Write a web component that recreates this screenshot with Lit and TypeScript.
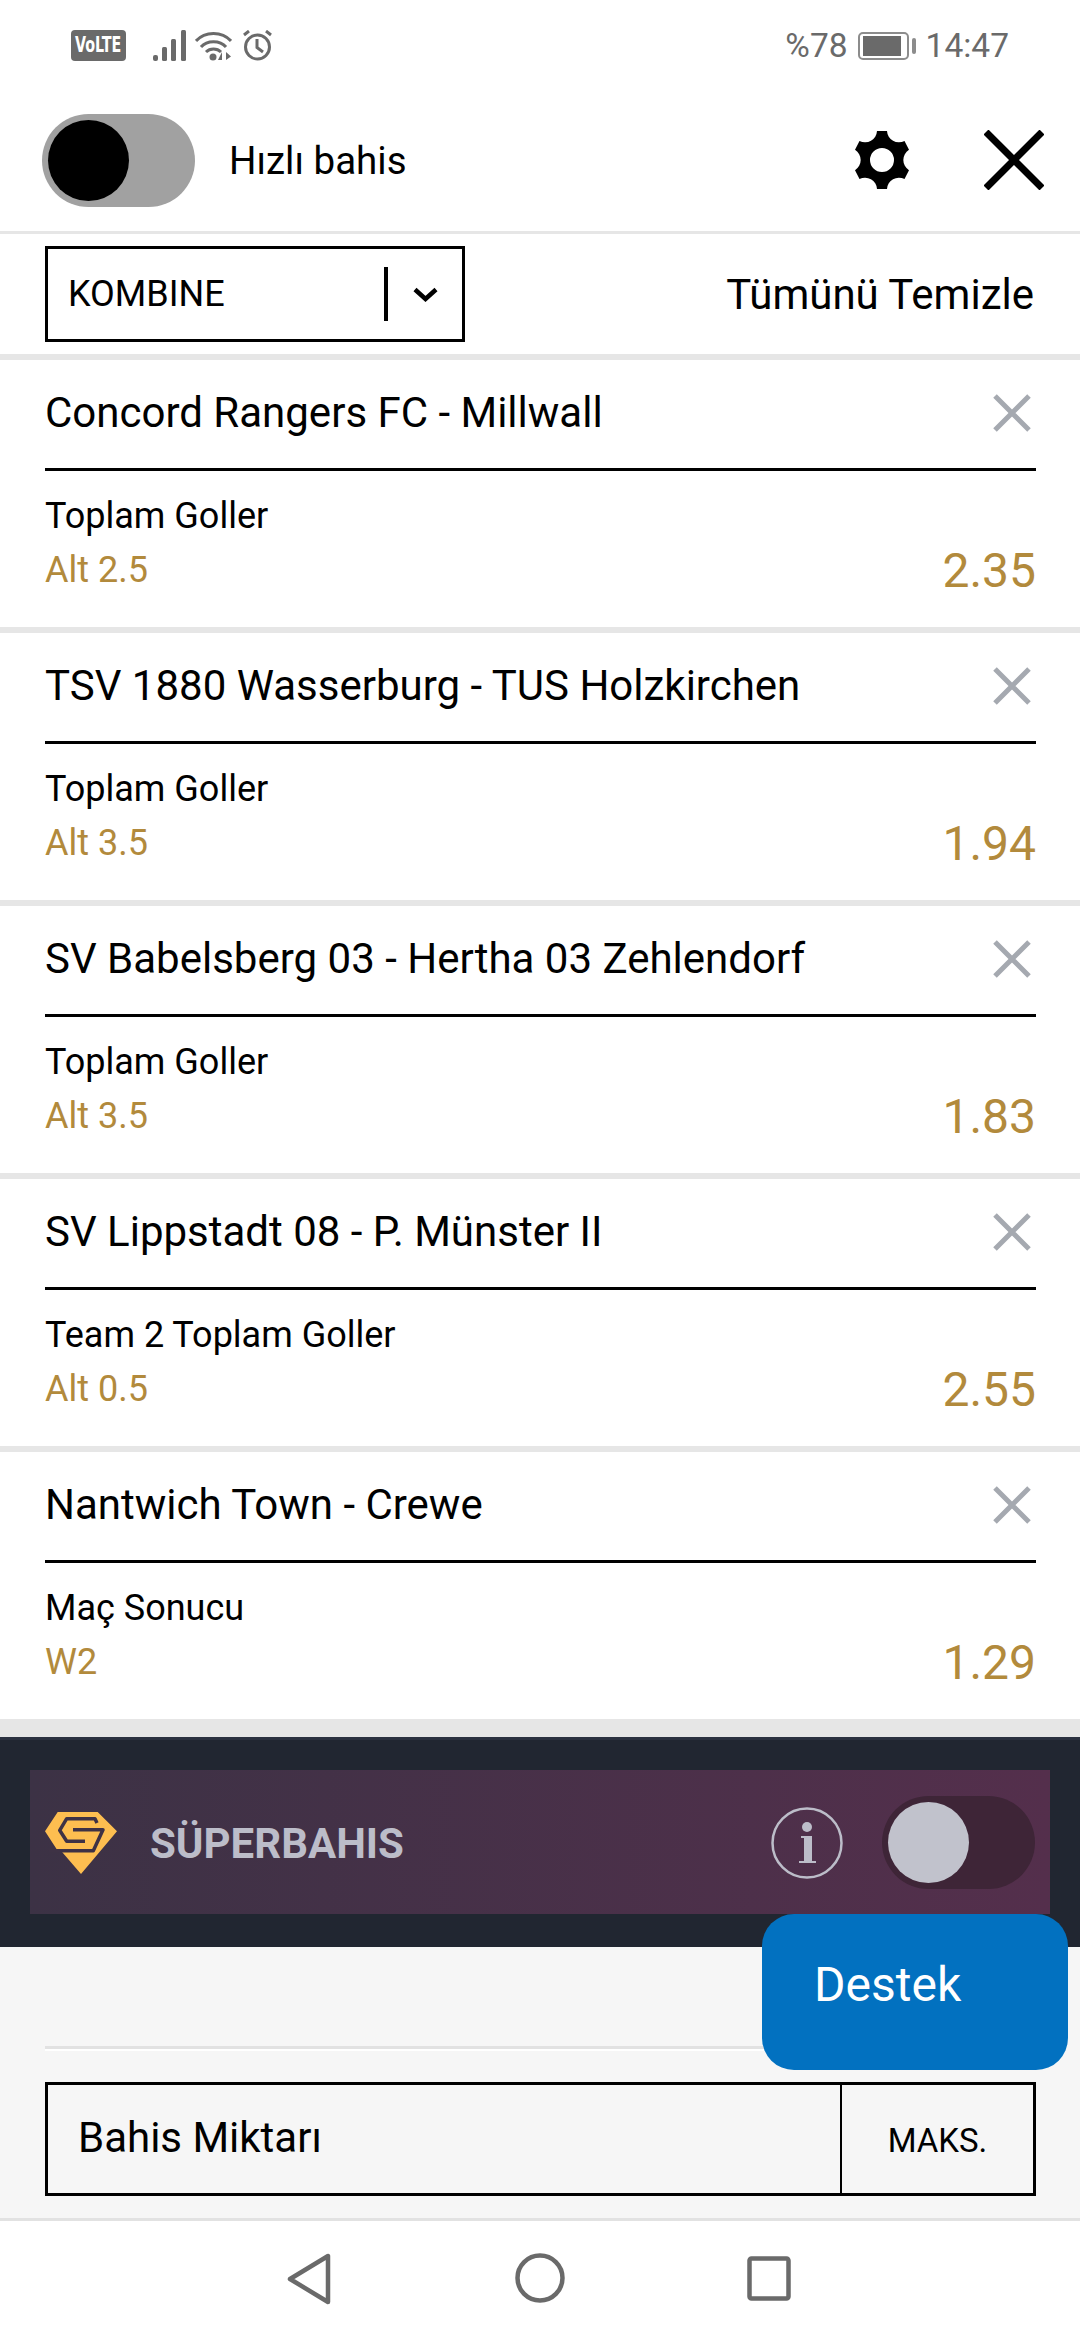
import { LitElement, html, css } from "lit";
import { customElement } from "lit/decorators.js";

const bets = [
  { t: "Concord Rangers FC - Millwall", m: "Toplam Goller", s: "Alt 2.5", o: "2.35" },
  { t: "TSV 1880 Wasserburg - TUS Holzkirchen", m: "Toplam Goller", s: "Alt 3.5", o: "1.94" },
  { t: "SV Babelsberg 03 - Hertha 03 Zehlendorf", m: "Toplam Goller", s: "Alt 3.5", o: "1.83" },
  { t: "SV Lippstadt 08 - P. Münster II", m: "Team 2 Toplam Goller", s: "Alt 0.5", o: "2.55" },
  { t: "Nantwich Town - Crewe", m: "Maç Sonucu", s: "W2", o: "1.29" },
];

@customElement("app-root")
export class AppRoot extends LitElement {
  static styles = css`
    :host { display: block; position: relative; width: 1080px; height: 2340px; overflow: hidden; background: #fff; font-family: Roboto, "Noto Sans", sans-serif; color: #000; }
    svg { display: block; flex: none; }
    .status { height: 84px; box-sizing: border-box; padding: 30px 0 0 71px; display: flex; color: #6a6a6a; font-size: 33.500px; }
    .status-left { display: flex; align-items: flex-start; }
    .volte { width: 55px; height: 31px; border-radius: 4px; background: #6a6a6a; color: #fff; margin-right: 27px; display: flex; align-items: center; justify-content: center; font-family: "DejaVu Sans", sans-serif; font-weight: 700; font-size: 21px; line-height: 31px; }
    .volte span { display: block; flex: none; transform: scaleX(0.68); }
    .signal { margin-right: 9px; }
    .wifi { margin-right: 10px; }
    .status-right { margin-left: auto; margin-right: 71px; display: flex; align-items: center; height: 31px; gap: 10px; line-height: 31px; }
    .header { height: 147px; box-sizing: border-box; padding: 5px 36px 0 42px; display: flex; align-items: center; }
    .fast { width: 153px; height: 93px; border-radius: 47px; background: #a1a1a1; display: flex; align-items: center; padding-left: 6px; box-sizing: border-box; margin-right: 34px; }
    .fast i { display: block; width: 81px; height: 81px; border-radius: 50%; background: #000; }
    .fast-label { font-size: 38.500px; flex: 1; }
    .gear { margin-right: 75px; }
    .sep { height: 3px; background: #e6e6e6; }
    .tools { height: 120px; box-sizing: border-box; padding: 12px 46px 12px 45px; display: flex; align-items: center; justify-content: space-between; }
    .select { width: 420px; height: 96px; box-sizing: border-box; border: 3px solid #000; display: flex; align-items: center; padding-left: 20px; font-size: 36px; }
    .select span { flex: 1; }
    .select b { display: block; width: 4px; height: 54px; background: #000; margin-right: 25px; }
    .select svg { margin-right: 24px; }
    .clear { font-size: 42px; }
    .card-gap { height: 6px; background: #e6e6e6; }
    .card { height: 267px; padding: 0 44px 0 45px; background: #fff; }
    .card-top { height: 108px; box-sizing: content-box; border-bottom: 3px solid #000; display: flex; align-items: center; justify-content: space-between; font-size: 42px; }
    .card-top span { margin-top: -3px; }
    .card-top svg { margin-right: 5px; margin-top: -3px; }
    .card-market { font-size: 36px; margin-top: 23px; line-height: 44px; }
    .card-foot { display: flex; justify-content: space-between; align-items: flex-start; color: #b28a3c; margin-top: 7px; }
    .alt { font-size: 36px; line-height: 50px; }
    .odds { font-size: 48px; line-height: 52px; }
    .end-gap { height: 18px; background: #e6e6e6; }
    .super { height: 210px; background: #212631; border-top: 3px solid #2b3140; box-sizing: border-box; padding: 30px 30px 33px 30px; }
    .banner { height: 144px; background: linear-gradient(90deg, #3c3245, #542f4c); display: flex; align-items: center; padding: 0 15px 0 15px; }
    .logo { margin-top: 1px; }
    .super-name { flex: 1; margin-left: 33px; font-size: 42px; font-weight: 700; color: #bcbdc9; margin-top: 2px; }
    .info { margin-right: 39px; margin-top: 2px; }
    .s-toggle { width: 153px; height: 93px; border-radius: 47px; background: #3e2537; display: flex; align-items: center; padding-left: 6px; box-sizing: border-box; }
    .s-toggle i { display: block; width: 81px; height: 81px; border-radius: 50%; background: #c1c2cc; }
    .stake-area { height: 271px; background: #f6f6f6; box-sizing: border-box; padding: 99px 44px 0 45px; }
    .rule { height: 3px; background: #e2e2e2; border-bottom: 2px solid #fff; margin-bottom: 31px; }
    .stake { height: 114px; box-sizing: border-box; border: 3px solid #000; display: flex; align-items: stretch; }
    .stake-label { flex: 1; font-size: 42px; padding: 0 0 4px 30px; display: flex; align-items: center; }
    .stake-max { width: 193px; border-left: 2px solid #000; box-sizing: border-box; font-size: 33px; display: flex; align-items: center; justify-content: center; padding-top: 3px; }
    .nav-sep { height: 3px; background: #e2e2e2; }
    .nav { height: 119px; background: #fff; display: flex; align-items: flex-start; box-sizing: border-box; padding: 32px 0 0 287px; }
    .nav .c { margin-left: 184px; }
    .nav .q { margin-left: 182px; margin-top: 3px; }
    .help { position: absolute; left: 762px; top: 1914px; width: 306px; height: 156px; border-radius: 32px; background: #0271c0; color: #fff; font-size: 48px; box-sizing: border-box; padding-left: 52px; line-height: 142px; }
  `;

  private cross(c: string, s: number, w: number) {
    return html`<svg width=${s} height=${s} viewBox="0 0 ${s} ${s}"><path d="M2 2L${s - 2} ${s - 2}M${s - 2} 2L2 ${s - 2}" stroke=${c} stroke-width=${w} fill="none"/></svg>`;
  }

  render() {
    return html`
      <div class="status">
        <div class="status-left">
          <div class="volte"><span>VoLTE</span></div>
          <svg class="signal" width="33" height="31" viewBox="0 0 33 31" fill="#6a6a6a"><rect x="0" y="25" width="5" height="6" rx="2"/><rect x="9" y="17" width="5" height="14" rx="1.500"/><rect x="18" y="9" width="5" height="22" rx="1.500"/><rect x="28" y="0" width="5" height="31" rx="1.500"/></svg>
          <svg class="wifi" width="37" height="31" viewBox="0 0 37 31"><g fill="none" stroke="#6a6a6a" stroke-width="3"><path d="M1 11C10 1 27 1 36 11"/><path d="M6 17C12 10 25 10 31 17"/><path d="M11 22C15 18 22 18 26 22"/></g><circle cx="18" cy="27" r="3.500" fill="#6a6a6a"/><path d="M27 30V22L23 30ZM31 30V22L36 26.500L31 30Z" fill="#6a6a6a"/></svg>
          <svg width="31" height="31" viewBox="0 0 31 31" fill="none" stroke="#6a6a6a" stroke-width="3"><circle cx="15.500" cy="17" r="12"/><path d="M15 9V17.500L21 22M2 5L7 1M24 1L29 5"/></svg>
        </div>
        <div class="status-right">
          <span>%78</span>
          <svg width="58" height="28" viewBox="0 0 58 28"><rect x="1" y="1" width="49" height="26" rx="4" fill="none" stroke="#8c8c8c" stroke-width="2"/><rect x="5" y="4" width="38" height="20" fill="#6a6a6a"/><rect x="54" y="6" width="4" height="16" rx="2" fill="#8c8c8c"/></svg>
          <span>14:47</span>
        </div>
      </div>
      <div class="header">
        <div class="fast"><i></i></div>
        <div class="fast-label">Hızlı bahis</div>
        <svg class="gear" width="54" height="58" viewBox="-27 -29 54 58"><path fill-rule="evenodd" d="M-5-29L5-29A12 12 0 0 0 22.500-19L27-10.200A12 12 0 0 0 27 10.200L22.500 19A12 12 0 0 0 5 29L-5 29A12 12 0 0 0-22.500 19L-27 10.200A12 12 0 0 0-27-10.200L-22.500-19A12 12 0 0 0-5-29ZM0-12A12 12 0 1 0 0 12A12 12 0 1 0 0-12Z"/></svg>
        ${this.cross("#000", 60, 7)}
      </div>
      <div class="sep"></div>
      <div class="tools">
        <div class="select"><span>KOMBINE</span><b></b>
          <svg width="25" height="15" viewBox="0 0 25 15"><path d="M2 2.500L12.500 12L23 2.500" fill="none" stroke="#000" stroke-width="4.500"/></svg>
        </div>
        <div class="clear">Tümünü Temizle</div>
      </div>
      ${bets.map((b) => html`
        <div class="card-gap"></div>
        <div class="card">
          <div class="card-top"><span>${b.t}</span>${this.cross("#a5a9b0", 38, 5)}</div>
          <div class="card-market">${b.m}</div>
          <div class="card-foot"><span class="alt">${b.s}</span><span class="odds">${b.o}</span></div>
        </div>`)}
      <div class="end-gap"></div>
      <div class="super">
        <div class="banner">
          <svg class="logo" width="72" height="64" viewBox="0 0 72 64">
            <path fill="#fdbe50" d="M12.700 1H52.700L72 20.300L36 63L16 39.700H12.700L0 20.300Z"/>
            <path fill="none" stroke="#3e3245" stroke-width="3.500" stroke-linejoin="round" d="M52 12L50 7.700H21.700L14.700 19.300L21.700 30.300H40"/>
            <path fill="none" stroke="#3e3245" stroke-width="3.500" stroke-linejoin="round" d="M28 18.700H58L48.300 39.700H4"/>
          </svg>
          <div class="super-name">SÜPERBAHIS</div>
          <svg class="info" width="72" height="72" viewBox="0 0 72 72"><circle cx="36" cy="36" r="34.500" fill="none" stroke="#bcbdc9" stroke-width="2.500"/><circle cx="36" cy="20" r="5" fill="#bcbdc9"/><path fill="#bcbdc9" d="M30 29H41V54H45V56H28V54H33V31H30Z"/></svg>
          <div class="s-toggle"><i></i></div>
        </div>
      </div>
      <div class="stake-area">
        <div class="rule"></div>
        <div class="stake">
          <div class="stake-label">Bahis Miktarı</div>
          <div class="stake-max">MAKS.</div>
        </div>
      </div>
      <div class="nav-sep"></div>
      <div class="nav">
        <svg width="44" height="52" viewBox="0 0 44 52"><path d="M41 3V49L3 26Z" fill="none" stroke="#6a6a6a" stroke-width="4.500" stroke-linejoin="round"/></svg>
        <svg class="c" width="50" height="50" viewBox="0 0 50 50"><circle cx="25" cy="25" r="22.500" fill="none" stroke="#6a6a6a" stroke-width="4.500"/></svg>
        <svg class="q" width="44" height="45" viewBox="0 0 44 45"><rect x="2.500" y="2.500" width="39" height="40" rx="2" fill="none" stroke="#6a6a6a" stroke-width="4.500"/></svg>
      </div>
      <div class="help">Destek</div>
    `;
  }
}
